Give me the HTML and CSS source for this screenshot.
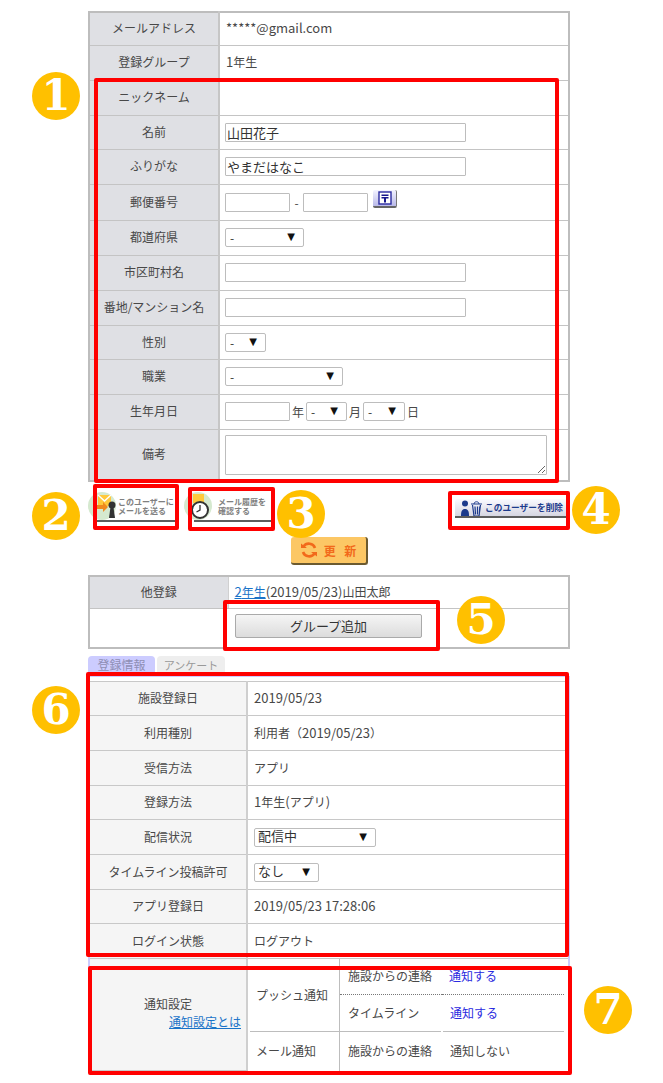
FILE: index.html
```html
<!DOCTYPE html>
<html lang="ja">
<head>
<meta charset="utf-8">
<title>ユーザー情報</title>
<link rel="stylesheet" href="styles.css">
</head>
<body>
<main class="page">
  <table class="form">
    <tr class="h33"><th>メールアドレス</th><td class="txt num">*****@gmail.com</td></tr>
    <tr class="h35"><th>登録グループ</th><td class="txt"><span class="num">1</span>年生</td></tr>
    <tr class="h35"><th>ニックネーム</th><td></td></tr>
    <tr class="h34"><th>名前</th><td><input class="long" value="山田花子"></td></tr>
    <tr class="h35"><th>ふりがな</th><td><input class="long" value="やまだはなこ"></td></tr>
    <tr class="h36"><th>郵便番号</th><td>
      <div class="inline">
        <input class="short"><span class="dash">-</span><input class="short">
        <span class="zip"><svg width="14" height="14" viewBox="0 0 14 14"><rect x="1" y="1" width="12" height="12" fill="#fff" stroke="#2a2aa0" stroke-width="1.4"/><path d="M3.500 3.500h7v1.600h-7zM3.500 6h7v1.400H8v4H6v-4H3.500z" fill="#15158c"/></svg></span>
      </div>
    </td></tr>
    <tr class="h35"><th>都道府県</th><td><span class="sel w79"><select><option>-</option></select></span></td></tr>
    <tr class="h35"><th>市区町村名</th><td><input class="long"></td></tr>
    <tr class="h35"><th>番地/マンション名</th><td><input class="long"></td></tr>
    <tr class="h34"><th>性別</th><td><span class="sel w41"><select><option>-</option></select></span></td></tr>
    <tr class="h35"><th>職業</th><td><span class="sel w118"><select><option>-</option></select></span></td></tr>
    <tr class="h35"><th>生年月日</th><td>
      <div class="inline">
        <input class="short"><span class="unit">年</span>
        <span class="sel w41"><select><option>-</option></select></span><span class="unit">月</span>
        <span class="sel w42"><select><option>-</option></select></span><span class="unit">日</span>
      </div>
    </td></tr>
    <tr class="h52"><th>備考</th><td><textarea></textarea></td></tr>
  </table>

  <div class="actions">
    <div class="img-btn mail">
      <svg class="ico" width="30" height="30" viewBox="0 0 30 30"><circle cx="14" cy="14" r="14" fill="#d5e9cf"/><rect x="10" y="3" width="13" height="11" fill="#ffc93c"/><path d="M10 3l6.500 6 6.500-6" fill="none" stroke="#fff" stroke-width="1.400"/><path d="M9 14h7v-3l5 5-5 5v-3H9z" transform="translate(-1 -1)" fill="#f08a1e"/><circle cx="24" cy="13" r="3.500" fill="#333"/><path d="M21 26l1.500-11h3L27 26z" fill="#333"/></svg>
      <span class="lbl">このユーザーに<br>メールを送る</span>
    </div>
    <div class="img-btn hist">
      <svg class="ico" width="30" height="30" viewBox="0 0 30 30"><circle cx="14" cy="14" r="14" fill="#d5e9cf"/><rect x="9" y="2" width="11" height="9" fill="#ffc93c"/><circle cx="16" cy="18" r="8" fill="#fff" stroke="#333" stroke-width="2"/><path d="M16 13v5l-3.500 2" fill="none" stroke="#333" stroke-width="1.300"/></svg>
      <span class="lbl">メール履歴を<br>確認する</span>
    </div>
    <div class="img-btn del">
      <svg class="ico" width="23" height="17" viewBox="0 0 23 17"><circle cx="5" cy="3.500" r="3" fill="#1c3a8c"/><path d="M1 16c0-5 1-7 4-7s4 2 4 7z" fill="#1c3a8c"/><path d="M11 4h11M12.500 5l1.500 11h5l1.500-11M15 6.500l.5 8M17.500 6.500v8M19.800 6.500l-.5 8" fill="none" stroke="#1c3a8c" stroke-width="1.200"/><path d="M14 4c0-3 5-3 5 0" fill="none" stroke="#1c3a8c"/></svg>
      <span class="lbl">このユーザーを削除</span>
    </div>
  </div>

  <div class="update-row">
    <div class="update">
      <svg width="18" height="18" viewBox="0 0 18 18"><path d="M15 7A6.500 6.500 0 0 0 3.500 5.500M3 11a6.500 6.500 0 0 0 11.500 1.500" fill="none" stroke="#f26a1b" stroke-width="2.600"/><path d="M1 2.500l6 4.500H1zM17 15.500l-6-4.500h6z" fill="#f26a1b"/></svg>
      <span class="update-text">更 新</span>
    </div>
  </div>

  <table class="other">
    <tr class="h32"><th>他登録</th><td class="txt"><a class="num" href="#">2</a><a href="#">年生</a><span class="num">(2019/05/23)</span>山田太郎</td></tr>
    <tr class="h40"><td class="blank"></td><td class="add-cell"><button class="add" type="button">グループ追加</button></td></tr>
  </table>

  <div class="tabs">
    <span class="tab on">登録情報</span>
    <span class="tab">アンケート</span>
  </div>

  <div class="panel">
    <table class="info">
      <tr class="h34"><th>施設登録日</th><td class="txt num">2019/05/23</td></tr>
      <tr class="h35"><th>利用種別</th><td class="txt">利用者（<span class="num">2019/05/23</span>）</td></tr>
      <tr class="h35"><th>受信方法</th><td class="txt">アプリ</td></tr>
      <tr class="h34"><th>登録方法</th><td class="txt"><span class="num">1</span>年生<span class="num">(</span>アプリ<span class="num">)</span></td></tr>
      <tr class="h35"><th>配信状況</th><td><span class="sel w122 big"><select><option>配信中</option></select></span></td></tr>
      <tr class="h35"><th>タイムライン投稿許可</th><td><span class="sel w65 big"><select><option>なし</option></select></span></td></tr>
      <tr class="h34"><th>アプリ登録日</th><td class="txt num">2019/05/23 17:28:06</td></tr>
      <tr class="h35"><th>ログイン状態</th><td class="txt">ログアウト</td></tr>
      <tr>
        <th class="notify-label">
          <div>通知設定</div>
          <div class="right"><a href="#">通知設定とは</a></div>
        </th>
        <td class="notify-cell">
          <div class="notify">
            <div class="n-head n-push">プッシュ通知</div>
            <div class="n-name n-a">施設からの連絡</div>
            <div class="n-val n-a"><a class="on-link" href="#">通知する</a></div>
            <div class="n-name n-b">タイムライン</div>
            <div class="n-val n-b"><a class="on-link" href="#">通知する</a></div>
            <div class="n-head n-mail">メール通知</div>
            <div class="n-name n-c">施設からの連絡</div>
            <div class="n-val n-c">通知しない</div>
          </div>
        </td>
      </tr>
    </table>
  </div>

  <div class="mark m1"></div>
  <div class="mark m2"></div>
  <div class="mark m3"></div>
  <div class="mark m4"></div>
  <div class="mark m5"></div>
  <div class="mark m6"></div>
  <div class="mark m7"></div>

  <div class="badge b1">1</div>
  <div class="badge b2">2</div>
  <div class="badge b3">3</div>
  <div class="badge b4">4</div>
  <div class="badge b5">5</div>
  <div class="badge b6">6</div>
  <div class="badge b7">7</div>
</main>
</body>
</html>
```

FILE: styles.css
```css
* { box-sizing: border-box; }
html, body { margin: 0; padding: 0; background: #fff; }
body {
  font-family: "Noto Sans CJK JP", "Noto Sans", sans-serif;
  font-size: 12px;
  color: #484848;
}
.page {
  position: relative;
  width: 663px;
  height: 1083px;
  overflow: hidden;
  padding: 11px 0 0 88px;
}
table { border-collapse: collapse; table-layout: fixed; }
th { font-weight: 400; text-align: center; }
td { text-align: left; }
.num { font-size: 13px; }
.h32 { height: 32px; }
.h33 { height: 33px; }
.h34 { height: 34px; }
.h35 { height: 35px; }
.h36 { height: 36px; }
.h40 { height: 40px; }
.h52 { height: 52px; }

.form { width: 482px; border: 2px solid #bdbdbd; }
.form th {
  width: 130px;
  background: #dfe0e4;
  border-right: 2px solid #c6c6c6;
  border-bottom: 1px solid #c4c4c4;
  padding: 0 0 2px;
}
.form td { padding: 0 0 0 5px; border-bottom: 1px solid #c4c4c4; }
.form td.txt { padding: 0 0 2px 6px; }
.form tr:last-child th, .form tr:last-child td { border-bottom: 0; }

input, textarea, select {
  font-family: inherit;
  color: #333;
  background: #fff;
  border: 1px solid #bdbdbd;
  border-radius: 1px;
  margin: 0;
}
input { height: 19px; padding: 0 1px; font-size: 13px; display: block; }
.long { width: 241px; }
.short { width: 65px; }
.inline { display: flex; align-items: center; }
.dash { width: 13px; text-align: center; }
.unit { width: 16px; text-align: center; font-size: 12px; }
.zip {
  width: 24px;
  height: 18px;
  margin: -6px 0 0 5px;
  display: flex;
  align-items: center;
  justify-content: center;
  background: linear-gradient(#f3f3ff, #b9b9e8);
  border-right: 1px solid #777;
  border-bottom: 2px solid #666;
  border-radius: 2px;
}
textarea { display: block; width: 322px; height: 40px; }

.sel { position: relative; display: block; flex: none; height: 19px; }
.sel select {
  appearance: none;
  -webkit-appearance: none;
  display: block;
  width: 100%;
  height: 100%;
  padding: 0 0 0 4px;
  font-size: 12px;
  border-radius: 2px;
}
.sel::after {
  content: "▼";
  position: absolute;
  right: 9px;
  top: 1px;
  font-size: 10px;
  line-height: 16px;
  color: #111;
  font-family: "DejaVu Sans", sans-serif;
  pointer-events: none;
}
.sel.big { border: 1px solid #bdbdbd; border-radius: 2px; overflow: hidden; }
.sel.big::after { top: 0; right: 8px; }
.sel.big select {
  font-size: 13px;
  border: 0;
  height: 24px;
  margin-top: -5px;
  padding-left: 3px;
  background: transparent;
}
.w41 { width: 41px; }
.w42 { width: 42px; }
.w65 { width: 65px; }
.w79 { width: 79px; }
.w118 { width: 118px; }
.w122 { width: 122px; }

.actions {
  display: flex;
  width: 482px;
  height: 55px;
  padding-top: 10px;
  align-items: flex-start;
}
.img-btn {
  position: relative;
  display: flex;
  align-items: flex-start;
  height: 30px;
  color: #808080;
  font-weight: 700;
  font-size: 8px;
  line-height: 9px;
}
.img-btn .lbl { white-space: nowrap; }
.img-btn::after {
  content: "";
  position: absolute;
  bottom: 0;
  right: 0;
  height: 2px;
  background: #5c5c5c;
}
.ico { flex: none; }
.mail { width: 88px; }
.mail .lbl { padding: 5px 0 0 0; }
.mail::after { left: 9px; }
.hist { width: 88px; margin-left: 8px; }
.hist .lbl { padding: 5px 0 0 4px; }
.hist::after { left: 10px; }
.img-btn.del {
  width: 112px;
  height: 19px;
  margin: 7px 3px 0 auto;
  padding: 1px 0 0 5px;
  background: linear-gradient(#fafaff, #d2d2de);
  color: #1c3a8c;
  font-size: 8.700px;
  line-height: 15px;
  border-radius: 3px 0 0 0;
  gap: 2px;
}
.del::after { left: 0; }
.update-row { display: flex; justify-content: center; width: 482px; }
.update {
  width: 77px;
  height: 28px;
  display: flex;
  align-items: center;
  justify-content: center;
  gap: 6px;
  background: #fcc765;
  border-right: 2px solid #6b5a30;
  border-bottom: 2px solid #6b5a30;
  border-radius: 3px;
  color: #f26a1b;
  font-weight: 700;
  font-size: 12px;
}
.update-text { word-spacing: 6px; }

.other { width: 482px; margin-top: 10px; border: 2px solid #bdbdbd; }
.other th {
  width: 139px;
  background: #dfe0e4;
  border-right: 1px solid #d0d0d0;
  border-bottom: 1px solid #c4c4c4;
  padding: 0 0 2px;
}
.other td { padding: 0 0 0 7px; border-bottom: 1px solid #c4c4c4; }
.other td.txt { padding: 0 0 2px 6px; }
.other tr:last-child td { border-bottom: 0; }
.other td.blank { border-right: 0; padding: 0; }
.other td.add-cell { padding: 0 0 4px 7px; }
a { color: #1a73c8; text-decoration: underline; }
.add {
  display: block;
  width: 187px;
  height: 24px;
  padding: 0;
  font-family: inherit;
  font-size: 13px;
  color: #333;
  background: linear-gradient(#f5f5f5, #dcdcdc);
  border: 1px solid #aaa;
  border-radius: 2px;
}

.tabs { display: flex; gap: 2px; margin-top: 7px; height: 20px; }
.tab {
  height: 20px;
  text-align: center;
  font-size: 11px;
  line-height: 18px;
  background: #eeeeee;
  color: #999;
  width: 68px;
  border-radius: 4px 4px 0 0;
}
.tab.on { font-size: 12px; background: #ccccff; color: #8f8fb5; width: 67px; }

.panel {
  width: 482px;
  border: 2px solid #ccccff;
  border-top-width: 1px;
  border-bottom-width: 1px;
  padding-top: 4px;
}
.info { width: 478px; }
.info th {
  width: 157px;
  background: #f5f5f5;
  border-right: 2px solid #cfcfcf;
  border-bottom: 1px solid #c8c8c8;
  padding: 0 0 2px;
}
.info td { padding: 0 0 0 6px; border-bottom: 1px solid #c8c8c8; }
.info td.txt { padding: 0 0 2px 6px; }
.info tr:first-child th, .info tr:first-child td { border-top: 1px solid #c8c8c8; }
.info .notify-label { border-bottom: 2px solid #c8c8c8; padding: 0 0 4px; }
.right { text-align: right; padding-right: 5px; margin-top: 1px; }
.info .notify-cell { padding: 0; border-bottom: 0; }
.notify {
  display: grid;
  grid-template-columns: 90px 102px 126px;
  grid-template-rows: 36px 37px 39px;
  padding-left: 2px;
}
.notify > div { display: flex; align-items: center; padding-bottom: 2px; }
.n-head { padding-left: 6px; border-right: 1px solid #bdbdbd; }
.n-push { grid-row: 1 / span 2; grid-column: 1; border-bottom: 1px solid #bdbdbd; }
.n-mail { grid-row: 3; grid-column: 1; }
.n-name { padding-left: 8px; margin-right: 1px; }
.n-val { padding-left: 7px; margin-left: 1px; }
.n-a { border-bottom: 1px dotted #777; margin-left: 0; margin-right: 0; }
.n-val.n-a { margin-right: 4px; }
.n-b { border-bottom: 1px solid #bdbdbd; }
.n-val.n-b { margin-right: 4px; }
.on-link { color: #2a2ae0; text-decoration: none; }

.mark { position: absolute; border: 4px solid #ff0000; border-radius: 2px; pointer-events: none; }
.m1 { left: 94px; top: 78px; width: 465px; height: 405px; }
.m2 { left: 93px; top: 484px; width: 86px; height: 46px; }
.m3 { left: 188px; top: 487px; width: 87px; height: 44px; }
.m4 { left: 448px; top: 491px; width: 122px; height: 39px; }
.m5 { left: 223px; top: 600px; width: 217px; height: 51px; }
.m6 { left: 86px; top: 672px; width: 483px; height: 285px; }
.m7 { left: 88px; top: 966px; width: 484px; height: 109px; }

.badge {
  position: absolute;
  width: 48px;
  height: 48px;
  border-radius: 50%;
  background: #ffc000;
  color: #fff;
  font-family: "DejaVu Serif", "Liberation Serif", serif;
  font-weight: 700;
  font-size: 42px;
  line-height: 47px;
  text-align: center;
}
.b1 { left: 32px; top: 72px; }
.b2 { left: 32px; top: 492px; }
.b3 { left: 277px; top: 490px; }
.b4 { left: 572px; top: 486px; }
.b5 { left: 457px; top: 596px; }
.b6 { left: 32px; top: 686px; }
.b7 { left: 584px; top: 986px; }
```
